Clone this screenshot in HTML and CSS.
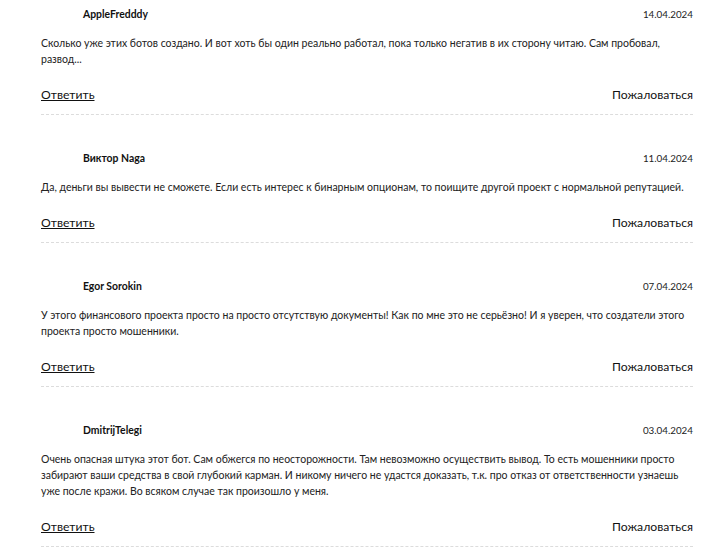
FILE: index.html
```html
<!DOCTYPE html>
<html lang="ru">
<head>
<meta charset="utf-8">
<link rel="stylesheet" href="styles.css">
</head>
<body>
<div class="comments">
  <div class="comment">
    <div class="head"><span class="name">AppleFredddy</span><span class="date">14.04.2024</span></div>
    <p class="text">Сколько уже этих ботов создано. И вот хоть бы один реально работал, пока только негатив в их сторону читаю. Сам пробовал, развод...</p>
    <div class="actions"><a class="reply" href="#">Ответить</a><a class="report" href="#">Пожаловаться</a></div>
  </div>
  <div class="comment">
    <div class="head"><span class="name">Виктор Naga</span><span class="date">11.04.2024</span></div>
    <p class="text">Да, деньги вы вывести не сможете. Если есть интерес к бинарным опционам, то поищите другой проект с нормальной репутацией.</p>
    <div class="actions"><a class="reply" href="#">Ответить</a><a class="report" href="#">Пожаловаться</a></div>
  </div>
  <div class="comment">
    <div class="head"><span class="name">Egor Sorokin</span><span class="date">07.04.2024</span></div>
    <p class="text">У этого финансового проекта просто на просто отсутствую документы! Как по мне это не серьёзно! И я уверен, что создатели этого проекта просто мошенники.</p>
    <div class="actions"><a class="reply" href="#">Ответить</a><a class="report" href="#">Пожаловаться</a></div>
  </div>
  <div class="comment">
    <div class="head"><span class="name">DmitrijTelegi</span><span class="date">03.04.2024</span></div>
    <p class="text">Очень опасная штука этот бот. Сам обжегся по неосторожности. Там невозможно осуществить вывод. То есть мошенники просто забирают ваши средства в свой глубокий карман. И никому ничего не удастся доказать, т.к. про отказ от ответственности узнаешь уже после кражи. Во всяком случае так произошло у меня.</p>
    <div class="actions"><a class="reply" href="#">Ответить</a><a class="report" href="#">Пожаловаться</a></div>
  </div>
</div>
</body>
</html>
```
FILE: styles.css
```css
html, body {
  margin: 0;
  padding: 0;
  background: #fff;
}
body {
  font-family: Lato, "Liberation Sans", sans-serif;
  color: #222;
}
.comments {
  width: 652px;
  margin-left: 41px;
}
.comment {
  padding: 35px 0 10px;
  border-bottom: 1px dashed #dcdcdc;
}
.comment:first-child {
  padding-top: 6px;
}
.head {
  display: flex;
  justify-content: space-between;
  align-items: center;
  padding-left: 42px;
  line-height: 16px;
}
.name {
  font-size: 10.4px;
  font-weight: 700;
  color: #111;
}
.date {
  font-size: 9.8px;
  color: #222;
}
.text {
  margin: 13px 0 0;
  font-size: 10.5px;
  line-height: 16px;
  color: #222;
}
.actions {
  display: flex;
  justify-content: space-between;
  margin-top: 19px;
  font-size: 12.2px;
  line-height: 18px;
}
.actions a {
  color: #111;
}
.reply {
  text-decoration: underline;
}
.report {
  text-decoration: none;
}
```
